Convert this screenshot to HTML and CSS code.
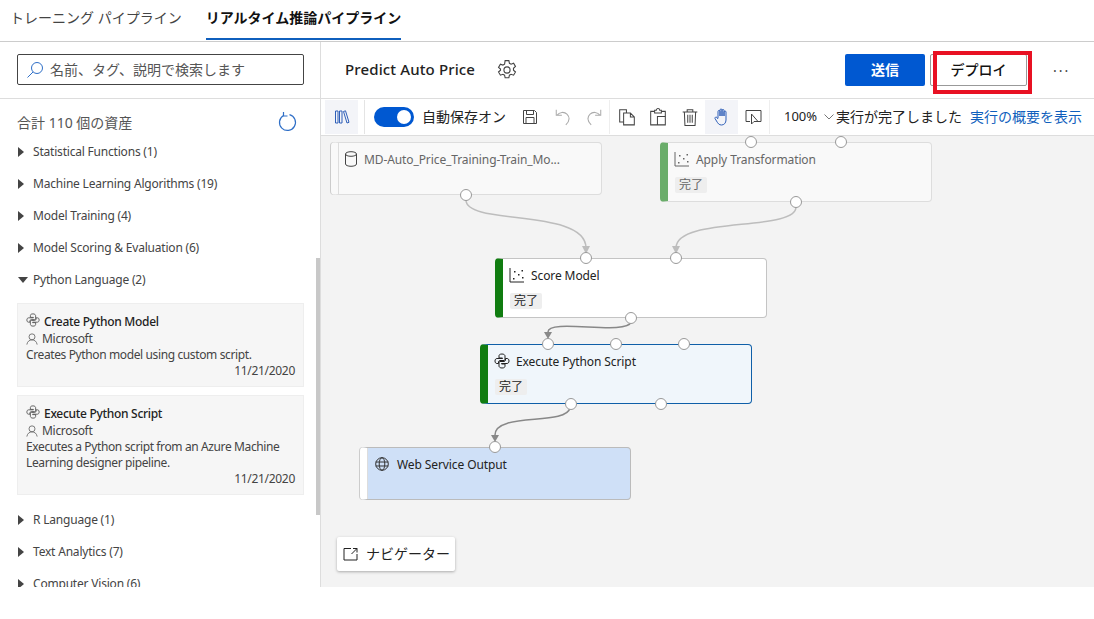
FILE: index.html
```html
<!DOCTYPE html>
<html>
<head lang="ja">
    <meta charset="UTF-8">
    <title>Predict Auto Price</title>
    <link rel="stylesheet" href="styles.css">
</head>
<body>
<svg class="defs" width="0" height="0">
    <symbol id="i-python" viewBox="0 0 16 16">
        <path d="M8 1C5.500 1 5 2 5 3v2h3.500v.5H3C1.800 5.500 1 6.500 1 8c0 1.700.8 2.500 2 2.500h1.500V9c0-1 .8-1.500 1.500-1.500h4c.7 0 1-.5 1-1.200V3c0-1-1-2-3-2z" fill="none" stroke="currentColor"/>
        <path d="M8 15c2.500 0 3-1 3-2v-2H7.500v-.5H13c1.200 0 2-1 2-2.500 0-1.700-.8-2.500-2-2.500h-1.500V7c0 1-.8 1.500-1.500 1.500H6c-.7 0-1 .5-1 1.200V13c0 1 1 2 3 2z" fill="none" stroke="currentColor"/>
    </symbol>
    <symbol id="i-scatter" viewBox="0 0 16 16">
        <path d="M1 1v14h14" fill="none" stroke="currentColor"/>
        <path d="M4 11h1.500v1.500H4zM5 4h1.500v1.500H5zM9 7h1.500v1.500H9zM12.500 3H14v1.500h-1.500zM13 10h1.500v1.500H13z" fill="currentColor"/>
    </symbol>
</svg>

<div class="tabs">
    <span class="tab">トレーニング パイプライン</span>
    <span class="tab active">リアルタイム推論パイプライン</span>
</div>

<div class="app">
    <div class="sidebar">
        <div class="search-row">
            <div class="search">
                <svg width="18" height="18" viewBox="0 0 18 18"><circle cx="11" cy="7" r="5.500" fill="none" stroke="#2f6fc7"/><path d="M7 11l-5.500 5.500" stroke="#2f6fc7"/></svg>
                <span>名前、タグ、説明で検索します</span>
            </div>
        </div>
        <div class="assets">
            <div class="assets-head">
                <span>合計 110 個の資産</span>
                <svg width="20" height="20" viewBox="0 0 20 20"><path d="M5.500 3.500a8 8 0 1 0 6-.8" fill="none" stroke="#2f6fc7" stroke-width="1.200"/><path d="M5.500 0v4H9.500" fill="none" stroke="#2f6fc7" stroke-width="1.200"/></svg>
            </div>
            <div class="group"><i class="tri"></i>Statistical Functions (1)</div>
            <div class="group"><i class="tri"></i>Machine Learning Algorithms (19)</div>
            <div class="group"><i class="tri"></i>Model Training (4)</div>
            <div class="group"><i class="tri"></i>Model Scoring &amp; Evaluation (6)</div>
            <div class="group"><i class="tri open"></i>Python Language (2)</div>
            <div class="card">
                <div class="card-title"><svg width="14" height="14"><use href="#i-python"/></svg>Create Python Model</div>
                <div class="card-author"><svg width="12" height="12" viewBox="0 0 14 14"><circle cx="7" cy="4.500" r="3.500" fill="none" stroke="#666"/><path d="M1 13.500c.5-3.500 3-5.500 6-5.500s5.500 2 6 5.500" fill="none" stroke="#666"/></svg>Microsoft</div>
                <div class="card-desc">Creates Python model using custom script.</div>
                <div class="card-date">11/21/2020</div>
            </div>
            <div class="card">
                <div class="card-title"><svg width="14" height="14"><use href="#i-python"/></svg>Execute Python Script</div>
                <div class="card-author"><svg width="12" height="12" viewBox="0 0 14 14"><circle cx="7" cy="4.500" r="3.500" fill="none" stroke="#666"/><path d="M1 13.500c.5-3.500 3-5.500 6-5.500s5.500 2 6 5.500" fill="none" stroke="#666"/></svg>Microsoft</div>
                <div class="card-desc">Executes a Python script from an Azure Machine Learning designer pipeline.</div>
                <div class="card-date">11/21/2020</div>
            </div>
            <div class="group after-cards"><i class="tri"></i>R Language (1)</div>
            <div class="group"><i class="tri"></i>Text Analytics (7)</div>
            <div class="group"><i class="tri"></i>Computer Vision (6)</div>
        </div>
        <div class="scrollbar"></div>
    </div>

    <div class="main">
        <div class="header">
            <span class="title">Predict Auto Price</span>
            <svg class="gear" width="22" height="22" viewBox="0 0 20 20"><path d="M8.300 1.500h3.400l.5 2.400 1.500.8 2.300-.8 1.700 2.900-1.800 1.600v1.800l1.800 1.600-1.700 2.900-2.300-.8-1.500.8-.5 2.400H8.300l-.5-2.400-1.500-.8-2.300.8-1.700-2.900 1.800-1.600V9.200L2.300 7.600 4 4.700l2.300.8 1.500-.8z" fill="none" stroke="#444"/><circle cx="10" cy="10" r="2.800" fill="none" stroke="#444"/></svg>
            <span class="spacer"></span>
            <button class="btn primary"><span>送信</span></button>
            <button class="btn deploy"><span>デプロイ</span></button>
            <span class="more">···</span>
            <div class="highlight"></div>
        </div>

        <div class="toolbar">
            <span class="tool-box lib">
                <svg width="16" height="16" viewBox="0 0 16 16"><path d="M1.500 2h2.500v12H1.500zM5.500 2H8v12H5.500zM9.500 2.500l2-.7 3.500 11.500-2 .7z" fill="none" stroke="#2f5fb8"/></svg>
            </span>
            <span class="sep"></span>
            <span class="toggle"><i></i></span>
            <span class="autosave">自動保存オン</span>
            <svg class="ic-save" width="16" height="16" viewBox="0 0 16 16"><path d="M1.500 1.500h11l2 2v11h-13z" fill="none" stroke="#444"/><path d="M4.500 1.500v4h7v-4M4 14.500v-6h8v6" fill="none" stroke="#444"/></svg>
            <svg class="ic-undo" width="18" height="18" viewBox="0 0 16 16"><path d="M2 1.500v5h5M2.500 6.500C5 3.500 9 3 11.500 5.500c3 3 2 6.500-1 9.500" fill="none" stroke="#aaa" stroke-width=".9"/></svg>
            <svg class="ic-redo" width="18" height="18" viewBox="0 0 16 16"><path d="M14 1.500v5H9M13.500 6.500C11 3.500 7 3 4.500 5.500c-3 3-2 6.500 1 9.500" fill="none" stroke="#aaa" stroke-width=".9"/></svg>
            <span class="sep light"></span>
            <svg class="ic-copy" width="18" height="18" viewBox="0 0 16 16"><path d="M1.500 1.500h6v11h-6z" fill="none" stroke="#444" stroke-width=".9"/><path d="M5 4.500h6l3.500 3.500v7H5zM11 4.500V8h3.500" fill="#fff" stroke="#444" stroke-width=".9"/></svg>
            <svg class="ic-paste" width="18" height="18" viewBox="0 0 16 16"><path d="M5 3H1.500v12h13V3H11" fill="none" stroke="#444" stroke-width=".9"/><path d="M5 4.500V2h1.500a1.500 1.500 0 0 1 3 0H11v2.500zM7.500 15V7.500h7" fill="none" stroke="#444" stroke-width=".9"/></svg>
            <svg class="ic-trash" width="18" height="18" viewBox="0 0 16 16"><path d="M1.500 3.500h13M5.500 3.500V1.500h5v2M3 3.500l.5 12h9l.5-12" fill="none" stroke="#444" stroke-width=".9"/><path d="M6 6v7M8 6v7M10 6v7" stroke="#444" stroke-width=".9"/></svg>
            <span class="tool-box hand">
                <svg width="16" height="18" viewBox="0 0 16 18"><path d="M4 10V3.500a1 1 0 0 1 2 0V8M6 8V2a1 1 0 0 1 2 0v6M8 8V2.500a1 1 0 0 1 2 0V8M10 8V4a1 1 0 0 1 2 0v8c0 3-2 5-4.500 5S4 15.500 2.500 13L1 10.500c-.5-1 1-2 2-1L4 11" fill="none" stroke="#2f5fb8"/></svg>
            </span>
            <svg class="ic-pointer" width="17" height="16" viewBox="0 0 17 16"><path d="M5 12.500H1V1.500h15v11h-3" fill="none" stroke="#444"/><path d="M6.500 5v10l2.500-2.500h4z" fill="#fff" stroke="#444"/></svg>
            <span class="sep light"></span>
            <span class="zoom">100%</span>
            <svg class="chev" width="10" height="6" viewBox="0 0 10 6"><path d="M.5.500L5 5 9.500.500" fill="none" stroke="#777"/></svg>
            <span class="status">実行が完了しました</span>
            <span class="link">実行の概要を表示</span>
        </div>

        <div class="canvas">
            <svg class="edges" width="773" height="451" viewBox="321 136 773 451">
                <path d="M466 200C466 226 586 208 586 248" fill="none" stroke="#bdbdbd" stroke-width="1.500"/>
                <path d="M582 246h8l-4 8z" fill="#bdbdbd"/>
                <path d="M796 207C796 232 676 216 676 248" fill="none" stroke="#bdbdbd" stroke-width="1.500"/>
                <path d="M672 246h8l-4 8z" fill="#bdbdbd"/>
                <path d="M631 322C627 336 548 318 548 332" fill="none" stroke="#888" stroke-width="1.500"/>
                <path d="M544 332h8l-4 7z" fill="#888"/>
                <path d="M570 408C566 426 495 412 495 435" fill="none" stroke="#888" stroke-width="1.500"/>
                <path d="M491 435h8l-4 7z" fill="#888"/>
            </svg>

            <div class="node faded blank n-dataset">
                <div class="node-title"><svg width="14" height="16" viewBox="0 0 14 16"><ellipse cx="7" cy="3" rx="5.500" ry="2.300" fill="none" stroke="#444"/><path d="M1.500 3v10c0 1.300 2.500 2.300 5.500 2.300s5.500-1 5.500-2.300V3" fill="none" stroke="#444"/></svg>MD-Auto_Price_Training-Train_Mo...</div>
                <i class="port" style="left:135px;top:53px"></i>
            </div>
            <div class="node faded n-apply">
                <div class="node-title"><svg width="16" height="16"><use href="#i-scatter"/></svg>Apply Transformation</div>
                <span class="done">完了</span>
                <i class="port" style="left:90px;top:0"></i>
                <i class="port" style="left:180px;top:0"></i>
                <i class="port" style="left:135px;top:60px"></i>
            </div>
            <div class="node n-score">
                <div class="node-title"><svg width="16" height="16"><use href="#i-scatter"/></svg>Score Model</div>
                <span class="done">完了</span>
                <i class="port" style="left:90px;top:0"></i>
                <i class="port" style="left:180px;top:0"></i>
                <i class="port" style="left:135px;top:60px"></i>
            </div>
            <div class="node selected n-exec">
                <div class="node-title"><svg width="16" height="16"><use href="#i-python"/></svg>Execute Python Script</div>
                <span class="done">完了</span>
                <i class="port" style="left:67px;top:0"></i>
                <i class="port" style="left:135px;top:0"></i>
                <i class="port" style="left:203px;top:0"></i>
                <i class="port" style="left:90px;top:60px"></i>
                <i class="port" style="left:180px;top:60px"></i>
            </div>
            <div class="node blank output n-web">
                <div class="node-title"><svg width="14" height="14" viewBox="0 0 14 14"><circle cx="7" cy="7" r="6.300" fill="none" stroke="#333"/><ellipse cx="7" cy="7" rx="2.800" ry="6.300" fill="none" stroke="#333"/><path d="M.7 5h12.600M.7 9h12.600" stroke="#333"/></svg>Web Service Output</div>
                <i class="port" style="left:135px;top:0"></i>
            </div>

            <div class="navigator">
                <svg width="15" height="14" viewBox="0 0 15 14"><path d="M8 1.500H1v11.500h13V7M8.500 7l5.500-5.500M10 1.500h4v4" fill="none" stroke="#222"/></svg>
                <span>ナビゲーター</span>
            </div>
        </div>
    </div>
</div>
</body>
</html>
```

FILE: styles.css
```css
* {
    margin: 0;
    padding: 0;
    box-sizing: border-box;
}

body {
    font-family: "Noto Sans", "Noto Sans CJK JP", sans-serif;
    font-size: 12px;
    color: #222;
    background: #fff;
    overflow: hidden;
}

.defs {
    position: absolute;
}

/* tabs */
.tabs {
    height: 42px;
    display: flex;
    gap: 24px;
    padding-left: 10px;
    border-bottom: 1px solid #ccc;
}

.tab {
    height: 40px;
    line-height: 36px;
    font-size: 14px;
    color: #444;
}

.tab.active {
    font-weight: 700;
    color: #111;
    border-bottom: 2px solid #0f5fbd;
}

.app {
    display: flex;
    height: 545px;
}

/* left panel */
.sidebar {
    width: 321px;
    flex: none;
    border-right: 1px solid #ddd;
    position: relative;
    overflow: hidden;
}

.search-row {
    height: 57px;
    padding: 12px 16px 0 17px;
    border-bottom: 1px solid #ddd;
}

.search {
    width: 287px;
    height: 31px;
    border: 1px solid #444;
    border-radius: 2px;
    display: flex;
    align-items: center;
    gap: 6px;
    padding-left: 8px;
    font-size: 14px;
    color: #555;
}

.search span {
    padding-bottom: 2px;
}

.assets-head {
    height: 37px;
    display: flex;
    align-items: center;
    justify-content: space-between;
    padding: 8px 22px 0 17px;
    font-size: 14px;
    color: #555;
}

.group {
    height: 32px;
    display: flex;
    align-items: center;
    padding: 0 0 1px 18px;
    color: #444;
    font-size: 12px;
    letter-spacing: -.2px;
    white-space: nowrap;
}

.tri {
    width: 0;
    height: 0;
    margin-right: 9px;
    border-left: 6px solid #444;
    border-top: 5px solid transparent;
    border-bottom: 5px solid transparent;
}

.tri.open {
    margin-right: 5px;
    border-left: 5px solid transparent;
    border-right: 5px solid transparent;
    border-top: 6px solid #444;
    border-bottom: 0;
}

.card {
    width: 287px;
    margin: 7px 0 8px 17px;
    padding: 10px 8px 7px;
    background: #f6f6f6;
    border: 1px solid #eee;
    color: #444;
    line-height: 16px;
    letter-spacing: -.3px;
}

.card + .card {
    margin-top: 0;
}

.card-title {
    display: flex;
    align-items: center;
    gap: 4px;
    font-weight: 500;
    color: #222;
}

.card-title svg {
    color: #555;
    margin-top: -5px;
}

.card-author {
    display: flex;
    align-items: center;
    gap: 4px;
    margin-top: 1px;
}

.card-desc {
    letter-spacing: -.38px;
}

.card-date {
    text-align: right;
}

.after-cards {
    margin-top: 9px;
}

.scrollbar {
    position: absolute;
    right: 0;
    top: 216px;
    width: 4px;
    height: 257px;
    background: #c8c8c8;
}

/* right side */
.main {
    flex: 1;
    display: flex;
    flex-direction: column;
    min-width: 0;
}

.header {
    height: 57px;
    display: flex;
    align-items: center;
    padding: 0 24px 0 24px;
    border-bottom: 1px solid #ddd;
    position: relative;
}

.title {
    font-size: 15px;
    font-weight: 500;
    letter-spacing: .13px;
    color: #222;
    padding-bottom: 2px;
}

.gear {
    margin-left: 21px;
}

.spacer {
    flex: 1;
}

.btn {
    height: 32px;
    font-family: inherit;
    font-size: 14px;
    border-radius: 2px;
}

.btn span {
    display: block;
    margin-top: -2px;
}

.btn.primary {
    width: 80px;
    background: #0058d1;
    border: 0;
    color: #fff;
    font-weight: 700;
}

.btn.deploy {
    width: 97px;
    margin-left: 5px;
    background: #fff;
    border: 1px solid #999;
    color: #111;
    font-weight: 500;
}

.more {
    margin-left: 26px;
    font-size: 14px;
    letter-spacing: 2px;
    color: #444;
    width: 17px;
}

.highlight {
    position: absolute;
    left: 612px;
    top: 9px;
    width: 99px;
    height: 43px;
    border: 4px solid #e81123;
}

.toolbar {
    height: 37px;
    display: flex;
    align-items: center;
    padding-left: 4px;
    border-bottom: 1px solid #ddd;
    font-size: 14px;
    color: #222;
}

.toolbar svg {
    flex: none;
}

.tool-box {
    width: 33px;
    height: 34px;
    background: #f3f4f8;
    display: flex;
    align-items: center;
    justify-content: center;
}

.sep {
    width: 1px;
    height: 34px;
    background: #e4e4e4;
    margin-left: 7px;
}

.lib + .sep,
.ic-redo + .sep {
    margin-left: 6px;
}

.sep.light {
    background: #eee;
}

.toggle {
    width: 40px;
    height: 20px;
    margin-left: 9px;
    border-radius: 10px;
    background: #0058d1;
    display: flex;
    justify-content: flex-end;
    align-items: center;
    padding-right: 3px;
}

.toggle i {
    width: 14px;
    height: 14px;
    border-radius: 50%;
    background: #fff;
}

.autosave {
    margin-left: 8px;
}

.autosave,
.zoom,
.status,
.link {
    padding-bottom: 2px;
}

.ic-save {
    margin-left: 16px;
}

.ic-undo {
    margin-left: 16px;
}

.ic-redo {
    margin-left: 13px;
}

.ic-copy {
    margin-left: 8px;
}

.ic-paste {
    margin-left: 13px;
}

.ic-trash {
    margin-left: 14px;
}

.hand {
    margin-left: 6px;
}

.ic-pointer {
    margin-left: 7px;
}

.zoom {
    margin-left: 14px;
    font-size: 13px;
    width: 40px;
}

.status {
    white-space: nowrap;
    margin-left: 2px;
}

.link {
    margin-left: 8px;
    color: #0f5fbd;
    white-space: nowrap;
}

/* diagram */
.canvas {
    flex: 1;
    position: relative;
    background: #f3f3f3;
}

.edges {
    position: absolute;
    left: 0;
    top: 0;
}

.node {
    position: absolute;
    width: 272px;
    height: 60px;
    background: #fff;
    border: 1px solid #c4c4c4;
    border-left: 8px solid #107c10;
    border-radius: 4px;
    padding: 8px 0 0 6px;
}

.node-title {
    display: flex;
    align-items: center;
    gap: 6px;
    height: 16px;
    color: #222;
    white-space: nowrap;
    letter-spacing: -.1px;
}

.done {
    display: inline-block;
    margin: 10px 0 0 1px;
    padding: 0 4px;
    height: 16px;
    line-height: 15px;
    background: #eee;
    border-radius: 2px;
    color: #222;
}

.port {
    position: absolute;
    width: 12px;
    height: 12px;
    margin: -7px 0 0 -13px;
    background: #fff;
    border: 1px solid #999;
    border-radius: 50%;
}

.blank {
    width: 271px;
    border-left-color: #fff;
    border-left-width: 7px;
    height: 53px;
    box-shadow: -1px 0 0 #ccc, inset 1px 0 0 #ddd;
}

.faded {
    background: #f9f9f9;
    border-color: #ddd;
}

.faded .node-title,
.faded .done {
    color: #666;
}

.faded.blank {
    border-left-color: #f9f9f9;
}

.n-dataset {
    left: 10px;
    top: 6px;
}

.n-apply {
    left: 339px;
    top: 6px;
    border-left-color: #6aad6a;
}

.n-score {
    left: 174px;
    top: 122px;
}

.n-exec {
    left: 159px;
    top: 208px;
    background: #f0f6fb;
    border-color: #0f5fa8;
    border-left-color: #107c10;
}

.n-web {
    left: 39px;
    top: 311px;
    background: #cfe0f7;
    border-color: #bbb;
    border-left-color: #fff;
    padding-left: 8px;
}

.n-web .node-title {
    gap: 8px;
}

.navigator {
    position: absolute;
    left: 16px;
    top: 401px;
    width: 118px;
    height: 34px;
    display: flex;
    align-items: center;
    gap: 8px;
    padding-left: 6px;
    background: #fff;
    border-radius: 2px;
    box-shadow: 0 1px 3px rgba(0, 0, 0, .3);
    font-size: 14px;
    color: #222;
}

.navigator span {
    padding-bottom: 2px;
}
```
